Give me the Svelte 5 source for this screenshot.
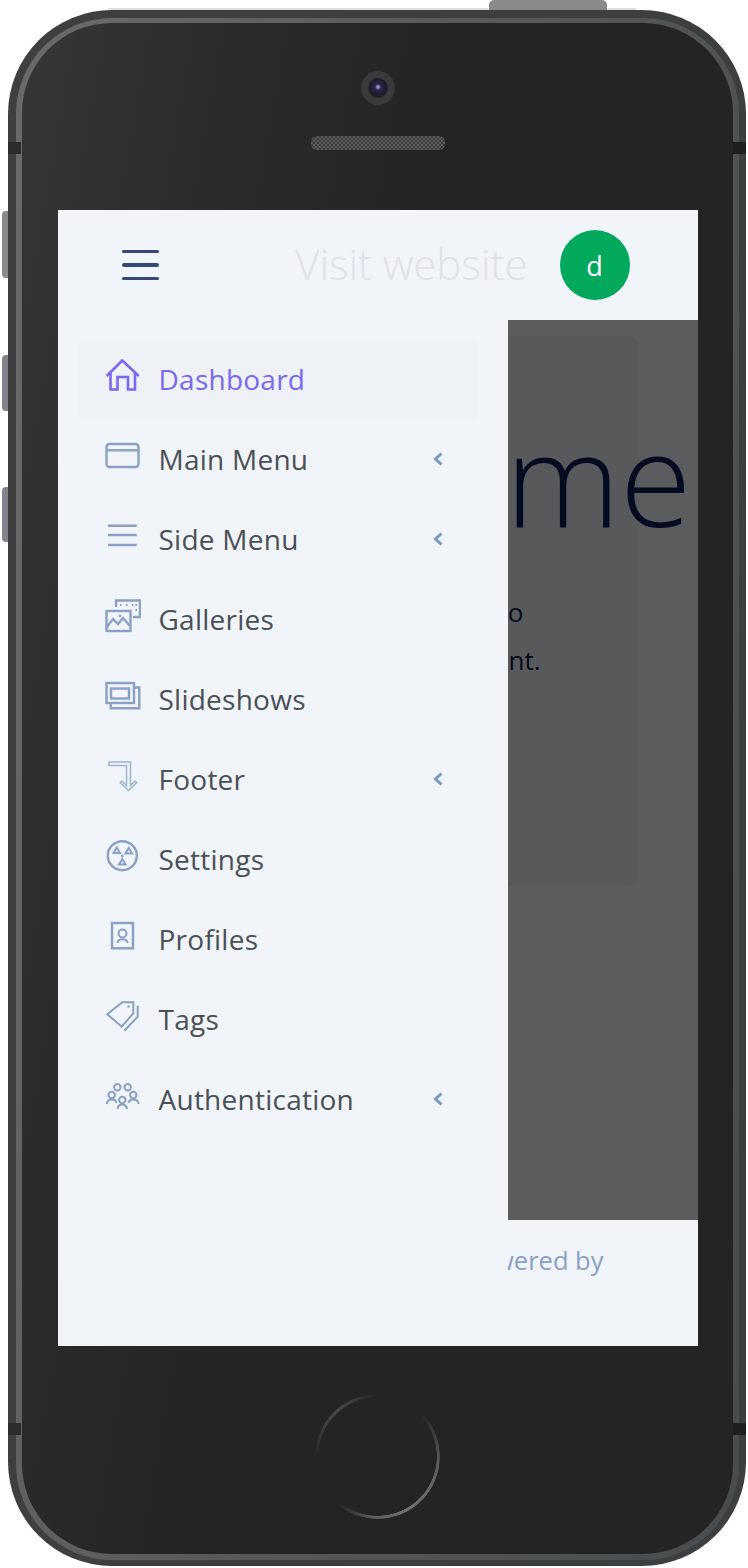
<script>
</script>

{#snippet home()}
  <svg class="ico active-ico" viewBox="0 0 36 36"><path d="M1.7 17 17.3 1.5 33.7 17M5.5 14V30.5H12.5V18H23V30.5H30V14" /></svg>
{/snippet}
{#snippet card()}
  <svg class="ico" viewBox="0 0 36 36"><rect x="1.5" y="5" width="32" height="23" rx="3" /><path d="M2 11.3H33" /></svg>
{/snippet}
{#snippet lines()}
  <svg class="ico" viewBox="0 0 36 36"><path d="M3 6.7H31.7M3 16H31.7M3 26H31.7" /></svg>
{/snippet}
{#snippet gallery()}
  <svg class="ico" viewBox="0 0 36 36"><rect x="1.5" y="12" width="24" height="20" /><path d="M1 29 8 20 13 25 18 19 25 27M11 8V1.5H35V18H28" /><path class="fine" d="M15 6H16.5M21 6H22.5M27 6H28.5M30.5 6H32M30.5 11H32" /><circle class="dot" cx="15" cy="17" r="1.4" /></svg>
{/snippet}
{#snippet slides()}
  <svg class="ico" viewBox="0 0 36 36"><rect x="1.5" y="4" width="27.5" height="20" /><rect x="6" y="9.5" width="18" height="10" /><path d="M29 8.5H34.3V29.3H5.7V24" /></svg>
{/snippet}
{#snippet turn()}
  <svg class="ico soft" viewBox="0 0 36 36"><path d="M4 3H25.5V26.5L30 22 31.7 23.7 23.5 31.5 15.3 23.7 17 22 21.5 26.5V6.5H4Z" /></svg>
{/snippet}
{#snippet radiation()}
  <svg class="ico" viewBox="0 0 36 36"><circle cx="17.3" cy="16.7" r="14.5" /><path class="fine" d="M11.7 8.5 15 14H8.5ZM23.7 9 27 14.5H20.5ZM17.3 20 20.5 25.5H14Z" /><circle class="dot" cx="17.3" cy="17" r="1.4" /></svg>
{/snippet}
{#snippet profile()}
  <svg class="ico" viewBox="0 0 36 36"><rect x="7" y="4" width="21" height="25.3" /><circle class="fine" cx="17.5" cy="14.5" r="4" /><path class="fine" d="M12.5 24C12.5 19 22.5 19 22.5 24" /></svg>
{/snippet}
{#snippet tag()}
  <svg class="ico" viewBox="0 0 36 36"><path class="mid" d="M2.3 15.3 17.3 3.3H28.3V14.3L16.7 27.7ZM32.7 6.7V17.7L19.3 31.7" /><circle class="dot" cx="23.5" cy="7.5" r="1.2" /></svg>
{/snippet}
{#snippet group()}
  <svg class="ico" viewBox="0 0 36 36"><g class="fine"><circle cx="12.3" cy="8.3" r="3.2" /><circle cx="22.7" cy="8.3" r="3.2" /><circle cx="6.7" cy="16" r="3.2" /><circle cx="28.3" cy="16" r="3.2" /><circle cx="17.3" cy="21" r="3.2" /><path d="M1.7 25Q2.5 20.5 6.7 20.5 11 20.5 11.5 24M23.5 24Q24 20.5 28.3 20.5 33 20.5 33.7 25M12.5 30Q13 25.5 17.3 25.5 21.5 25.5 22 30" /></g></svg>
{/snippet}

{#snippet row(label, icon, chevron = false, active = false)}
  <li class="item" class:active>
    <span class="slot">{@render icon()}</span>
    <span class="label">{label}</span>
    {#if chevron}
      <svg class="chev" viewBox="0 0 12 16"><path d="M9.5 2.5 3.5 8 9.5 13.5" /></svg>
    {/if}
  </li>
{/snippet}

<div class="page">
  <div class="phone">
    <i class="top-btn"></i>
    <i class="side-btn b1"></i>
    <i class="side-btn b2"></i>
    <i class="side-btn b3"></i>
    <i class="seam l t"></i>
    <i class="seam r t"></i>
    <i class="seam l b"></i>
    <i class="seam r b"></i>
    <div class="band">
      <div class="face">
        <div class="camera"><span class="lens"></span></div>
        <div class="speaker"></div>
        <div class="screen">
          <header class="bar">
            <div class="burger"><span></span><span></span><span></span></div>
            <a class="visit" href="#top">Visit website</a>
            <div class="avatar">d</div>
          </header>
          <main class="content">
            <section class="panel">
              <h1>Welcome</h1>
              <p><span class="first">to</span><br />content.</p>
            </section>
          </main>
          <footer class="foot">Powered by</footer>
          <nav class="drawer">
            <ul>
              {@render row('Dashboard', home, false, true)}
              {@render row('Main Menu', card, true)}
              {@render row('Side Menu', lines, true)}
              {@render row('Galleries', gallery)}
              {@render row('Slideshows', slides)}
              {@render row('Footer', turn, true)}
              {@render row('Settings', radiation)}
              {@render row('Profiles', profile)}
              {@render row('Tags', tag)}
              {@render row('Authentication', group, true)}
            </ul>
          </nav>
        </div>
        <div class="home"></div>
      </div>
    </div>
  </div>
</div>

<style>
  :global(body) { margin: 0; background: #fff; }
  .page { width: 748px; height: 1568px; padding: 10px 0 0 8px; box-sizing: border-box; overflow: hidden; }
  .phone {
    position: relative; width: 738px; height: 1556px; box-sizing: border-box;
    padding: 8px 7px 6px 8px; border-radius: 104px;
    background: linear-gradient(90deg, #3f3f3f 0, #3d3f3f 50%, #3c3f40 100%);
  }
  .phone::before { content: ""; position: absolute; left: 100px; right: 110px; top: -2px; height: 2px; background: #dedede; }
  .band {
    height: 100%; box-sizing: border-box; padding: 5px 6px 6px 6px; border-radius: 96px;
    background: linear-gradient(100deg, #6a6a6a 0, #666 12%, #55595a 50%, #484c4e 100%);
  }
  .face {
    height: 100%; box-sizing: border-box; padding-top: 48px; border-radius: 90px;
    display: flex; flex-direction: column; align-items: center;
    background: linear-gradient(100deg, #363636 0, #2b2b2b 22%, #242424 45%, #242424 100%);
  }
  .top-btn { position: absolute; left: 481px; top: -10px; width: 118px; height: 10px; background: #8a8a8a; border-radius: 5px 5px 0 0; }
  .side-btn { position: absolute; left: -6px; width: 6px; background: #8a8a8a; border-radius: 4px 0 0 4px; }
  .b1 { top: 201px; height: 67px; }
  .b2 { top: 345px; height: 56px; background: #83838c; }
  .b3 { top: 477px; height: 55px; background: #83838c; }
  .seam { position: absolute; width: 13px; height: 12px; background: #2c2c2c; }
  .seam.l { left: 0; }
  .seam.r { right: 0; background: #1e1f1f; }
  .seam.t { top: 132px; }
  .seam.b { top: 1413px; }

  .camera { width: 34px; height: 34px; border-radius: 50%; background: #3a3a3b; display: flex; align-items: center; justify-content: center; flex: none; }
  .lens { width: 20px; height: 20px; border-radius: 50%; background: radial-gradient(circle at 50% 45%, #9a98b0 0 1px, #2a2850 3px, #1c1b2c 8px, #222 10px); }
  .speaker {
    flex: none; width: 134px; height: 14px; margin-top: 31px; border-radius: 6px;
    background: repeating-conic-gradient(#5e5e5e 0 25%, #3a3a3a 0 50%) 0 0 / 4px 4px;
  }
  .screen {
    flex: none; position: relative; width: 640px; height: 1136px; margin: 60px 0 0;
    background: #f1f4f9; display: flex; flex-direction: column; overflow: hidden;
    font-family: "Open Sans", "Noto Sans", sans-serif;
  }
  .bar { flex: none; height: 110px; box-sizing: border-box; padding: 0 68px 0 64px; display: flex; align-items: center; }
  .burger { width: 37px; display: flex; flex-direction: column; gap: 10.1px; }
  .burger span { height: 3.4px; border-radius: 2px; background: #34497a; }
  .visit { margin-left: auto; font-size: 42px; line-height: 56px; margin-bottom: 2px; font-weight: 300; color: #dfe2e8; text-decoration: none; }
  .avatar { margin-left: 32px; width: 70px; height: 70px; border-radius: 50%; background: #02a85b; color: #fff; font-size: 27px; display: flex; align-items: center; justify-content: center; }

  .content { flex: none; height: 900px; box-sizing: border-box; padding: 16px 60px 0 0; background: #5b5c5e; display: flex; justify-content: flex-end; }
  .panel { width: 400px; height: 550px; box-sizing: border-box; background: #58595b; border-radius: 10px; color: #040a20; padding-top: 61px; }
  h1 { margin: 0 -54px 0 0; display: flex; justify-content: flex-end; font-size: 130px; font-weight: 300; line-height: 160px; white-space: nowrap; }
  p { margin: 31px 0 0; width: 303px; font-size: 26px; line-height: 48px; text-align: right; color: #06091a; }
  .first { padding-right: 17px; }
  .foot { flex: none; height: 126px; box-sizing: border-box; padding: 19px 94px 0 0; text-align: right; font-size: 25.5px; line-height: 42px; color: #8aa0c4; }

  .drawer { position: absolute; left: 0; top: 110px; bottom: 0; width: 450px; box-sizing: border-box; padding: 20px 30px 20px 20px; background: #f1f4f9; }
  ul { list-style: none; margin: 0; padding: 0; }
  .item { height: 80px; display: flex; align-items: center; border-radius: 8px; padding: 0 34px 0 27px; color: #4a5056; font-size: 28px; letter-spacing: 0.25px; }
  .item.active { background: #eef1f6; color: #7a68f0; }
  .slot { width: 54px; height: 42px; flex: none; display: block; }
  .label { flex: 1; padding-bottom: 2px; line-height: 38px; }
  .ico { display: block; width: 36px; height: 36px; fill: none; stroke: #8aa0c4; stroke-width: 2.4; stroke-linejoin: miter; }
  .active-ico { stroke: #7a68f0; stroke-width: 2.6; }
  .soft { stroke: #a0b2cf; stroke-width: 1.5; }
  .fine { stroke-width: 2; }
  .mid { stroke-width: 2; }
  .dot { fill: #8aa0c4; stroke: none; }
  .chev { width: 12px; height: 16px; fill: none; stroke: #7f96c0; stroke-width: 3; margin-top: -2px; }

  .home {
    flex: none; width: 125px; height: 125px; margin-top: 48px; border-radius: 50%;
    background: conic-gradient(transparent 0 45deg, #5a5a5a 95deg, #707070 150deg, #5e5e5e 185deg, transparent 218deg, transparent 268deg, #4a4a4a 320deg, transparent 360deg);
    -webkit-mask: radial-gradient(circle closest-side, transparent 59px, #000 59.5px);
    mask: radial-gradient(circle closest-side, transparent 59px, #000 59.5px);
  }
</style>
